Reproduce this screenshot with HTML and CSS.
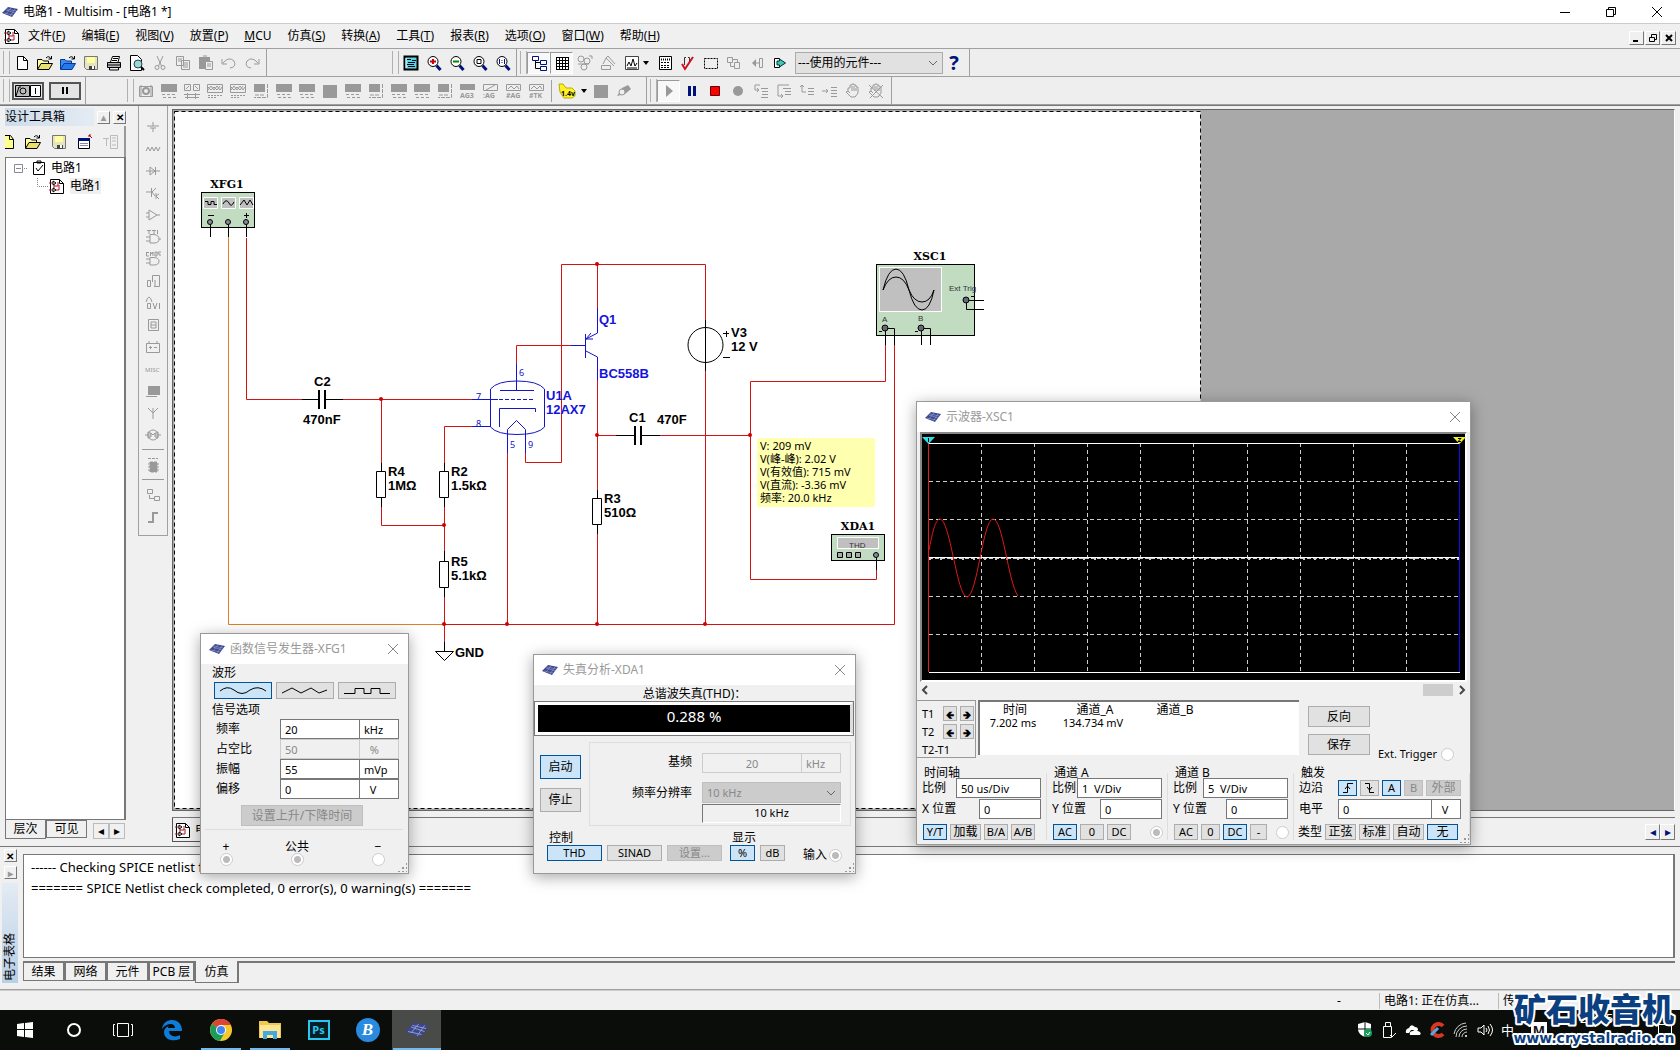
FILE: index.html
```html
<!DOCTYPE html>
<html lang="zh-CN">
<head>
    <meta charset="UTF-8">
    <title>电路1 - Multisim - [电路1 *]</title>
    <link rel="stylesheet" href="styles.css">
</head>
<body>
    <!-- icon library -->
    <svg class="defs" width="0" height="0">
        <defs>
            <symbol id="chip" viewBox="0 0 16 12"><path d="M0 7L6 1L16 3L10 11Z" fill="#3c488e"/><path d="M4 4L13 7M2 7L11 9M5 3L14 5M4 8L9 2M8 10L13 3" stroke="#98a2d4" stroke-width=".6" fill="none"/></symbol>
            <symbol id="doc" viewBox="0 0 16 16"><path d="M1.500 1.500H10.500L14.500 5.500V15.500H1.500Z" fill="#fff" stroke="#000"/><path d="M10.500 1.500V5.500H14.500" fill="none" stroke="#000"/><path d="M0 5H5V12H0M5 8H9V4M7 12H10V7" fill="none" stroke="#b01020"/><path d="M4 3L7 5L4 7ZM4 10L7 12L4 14Z" fill="#fff" stroke="#000"/></symbol>
            <symbol id="new" viewBox="0 0 16 16"><path d="M3.500 1.500H9.500L13.500 5.500V14.500H3.500Z" fill="#fff" stroke="#000"/><path d="M9.500 1.500V5.500H13.500" fill="none" stroke="#000"/></symbol>
            <symbol id="open" viewBox="0 0 16 16"><path d="M.5 14V4.500H5L6.500 6H11.500V9" fill="#ffff9c" stroke="#000"/><path d="M.5 14.500L4 8.500H15.500L12 14.500Z" fill="#e8e070" stroke="#000"/><path d="M9 3Q12 0 14 4M11.500 4H14.500V1" fill="none" stroke="#000"/></symbol>
            <symbol id="openb" viewBox="0 0 16 16"><path d="M.5 14V4.500H5L6.500 6H11.500V9" fill="#3c8cf0" stroke="#003a9c"/><path d="M.5 14.500L4 8.500H15.500L12 14.500Z" fill="#2878e8" stroke="#003a9c"/><path d="M9 3Q12 0 14 4M11.500 4H14.500V1" fill="none" stroke="#000"/></symbol>
            <symbol id="save" viewBox="0 0 16 16"><path d="M1.500 1.500H14.500V14.500H3.500L1.500 12.500Z" fill="#e4e4c0" stroke="#777"/><path d="M4 2H12V8H4Z" fill="#ffffa0"/><path d="M6 11H12V15H6Z" fill="#444"/><path d="M9 11H11V14H9Z" fill="#fff"/></symbol>
            <symbol id="print" viewBox="0 0 16 16"><path d="M4.500 7L6.500 1.500H13.500L12 7" fill="#fff" stroke="#000"/><path d="M1.500 7.500H14.500V12.500H1.500Z" fill="#bbb" stroke="#000"/><path d="M3.500 12.500H12.500V15H3.500ZM7 3.500H12M6 5.500H11M2 10H14" fill="none" stroke="#000"/></symbol>
            <symbol id="preview" viewBox="0 0 16 16"><path d="M1.500 .5H8.500L12.500 4.500V15.500H1.500Z" fill="#fff" stroke="#000"/><circle cx="9" cy="9" r="4" fill="#9fd8d0" stroke="#245"/><path d="M12 12L15 15" stroke="#000" stroke-width="2"/></symbol>
            <symbol id="cut" viewBox="0 0 16 16"><path d="M5 1L9.500 11M11 1L6.500 11" stroke="#999"/><circle cx="5" cy="12.500" r="2" fill="none" stroke="#999"/><circle cx="11" cy="12.500" r="2" fill="none" stroke="#999"/></symbol>
            <symbol id="copy" viewBox="0 0 16 16"><path d="M1.500 1.500H8.500V10.500H1.500ZM6.500 5.500H14.500V14.500H6.500ZM3 4H7M3 6H6M8 8H13M8 10H13M8 12H13" fill="none" stroke="#999"/></symbol>
            <symbol id="paste" viewBox="0 0 16 16"><path d="M1 2H12V14H1Z" fill="#999"/><path d="M7.500 6.500H14.500V14.500H7.500Z" fill="#eee" stroke="#999"/><path d="M9 9H13M9 11H13M5 1H9" stroke="#999"/></symbol>
            <symbol id="undo" viewBox="0 0 16 16"><path d="M1 4V9H6M2 8Q8 1 13 6Q16 12 9 13" fill="none" stroke="#999"/></symbol>
            <symbol id="redo" viewBox="0 0 16 16"><path d="M15 4V9H10M14 8Q8 1 3 6Q0 12 7 13" fill="none" stroke="#999"/></symbol>
            <symbol id="full" viewBox="0 0 16 16"><path d="M1.500 1.500H14.500V14.500H1.500Z" fill="#5cd8d8" stroke="#000" stroke-width="2"/><path d="M3 3V13" stroke="#fff"/><path d="M4 4.500H8M9 5.500H13M5 7.500H12M4 9.500H11M5 11.500H12" stroke="#003"/></symbol>
            <symbol id="mag" viewBox="0 0 16 16"><circle cx="7" cy="6.500" r="5" fill="#fff" stroke="#000"/><path d="M10.500 10.500L14.500 15" stroke="#00107c" stroke-width="3"/></symbol>
            <symbol id="tree" viewBox="0 0 16 16"><path d="M1.500 1.500H7.500V5.500H1.500ZM9.500 5.500H15.500V9.500H9.500ZM9.500 11.500H15.500V15.500H9.500Z" fill="#fff" stroke="#00107c"/><path d="M4.500 6V13.500H9M4.500 7.500H9" stroke="#000" fill="none"/></symbol>
            <symbol id="grid" viewBox="0 0 16 16"><path d="M2 2H15V15H2Z" fill="#fff"/><path d="M2.500 2V15M5.500 2V15M8.500 2V15M11.500 2V15M14.500 2V15M2 2.500H15M2 5.500H15M2 8.500H15M2 11.500H15M2 14.500H15" stroke="#000"/></symbol>
            <symbol id="gates" viewBox="0 0 16 16"><circle cx="4" cy="4" r="3" fill="none" stroke="#999"/><circle cx="10" cy="6" r="3" fill="none" stroke="#999"/><circle cx="7" cy="12" r="3" fill="none" stroke="#999"/><path d="M12 1H15V4M1 9H12" stroke="#999" fill="none"/></symbol>
            <symbol id="pen" viewBox="0 0 16 16"><path d="M1.500 10.500H10.500V14.500H1.500ZM3 9L6 3L14 11M6 3L8 1L15 9" fill="none" stroke="#999"/></symbol>
            <symbol id="graph" viewBox="0 0 16 16"><path d="M1.500 1.500H14.500V14.500H1.500Z" fill="#fff" stroke="#444"/><path d="M3 11L5 7L7 11L9 4L11 11L13 8M3 13H13" stroke="#000" fill="none"/></symbol>
            <symbol id="calc" viewBox="0 0 16 16"><path d="M2.500 1.500H14.500V14.500H2.500Z" fill="#fff" stroke="#000"/><path d="M4 4.500H13" stroke="#000" stroke-dasharray="1 1" stroke-width="2"/><path d="M4 7.500H13M4 10.500H13M4 12.500H13" stroke="#000" stroke-dasharray="2 1"/></symbol>
            <symbol id="erc" viewBox="0 0 16 16"><path d="M4.500 10V2.500H6M8 2.500H9.500V8" fill="none" stroke="#333"/><path d="M2 9L5 14L13 2" fill="none" stroke="#d0101c" stroke-width="2"/></symbol>
            <symbol id="area" viewBox="0 0 16 16"><path d="M1.500 3.500H14.500V13.500H1.500Z" fill="none" stroke="#000" stroke-dasharray="2 1"/></symbol>
            <symbol id="link" viewBox="0 0 16 16"><path d="M1.500 2.500H6.500V7.500H1.500ZM8.500 7.500H13.500V13.500H8.500ZM6 4.500H11.500V7M4.500 8V11.500H8" fill="none" stroke="#999"/></symbol>
            <symbol id="back" viewBox="0 0 16 16"><path d="M3 8L7 4V12Z" fill="#999"/><path d="M7 8H10M10.500 3.500H13.500V12.500H10.500Z" fill="none" stroke="#999"/></symbol>
            <symbol id="fwd" viewBox="0 0 16 16"><path d="M2.500 3.500H7.500V12.500H2.500Z" fill="#fff" stroke="#000"/><path d="M7.500 6V4L13.500 8L7.500 12V10H5V6Z" fill="#3cc8b4" stroke="#033"/></symbol>
            <!-- instruments, all disabled -->
            <symbol id="i1" viewBox="0 0 16 16"><path d="M1.500 3.500H14.500V13.500H1.500ZM3 2V14M13 2V14" fill="none" stroke="#999"/><circle cx="8" cy="8" r="3" fill="none" stroke="#999" stroke-width="2"/></symbol>
            <symbol id="i2" viewBox="0 0 16 16"><path d="M0 1H16V9H0Z" fill="#999"/><path d="M1 11.500H15M2 14.500H15" stroke="#999" stroke-dasharray="3 2"/></symbol>
            <symbol id="i3" viewBox="0 0 16 16"><path d="M.5 1.500H6.500V7.500H.5ZM9.500 1.500H15.500V7.500H9.500ZM2 6L5 3M11 3L14 6M0 11.500H16M1 14.500H15M3.500 10V16M11.500 10V16" fill="none" stroke="#999"/></symbol>
            <symbol id="i4" viewBox="0 0 16 16"><path d="M.5 1.500H15.500V9.500H.5ZM1 7L4 3L7 7L10 3L13 7L15 4M1 4L4 7L7 4L10 7L13 3" fill="none" stroke="#999"/><path d="M1 12.500H15M1 14.500H9" stroke="#999" stroke-dasharray="2 1"/></symbol>
            <symbol id="i5" viewBox="0 0 16 16"><path d="M1 1H12V9H1Z" fill="#999"/><path d="M14.500 1V14.500H1M2 12H12" fill="none" stroke="#999" stroke-dasharray="4 1"/></symbol>
            <symbol id="i6" viewBox="0 0 16 16"><path d="M1 2H15V15H1Z" fill="#999"/></symbol>
            <symbol id="probe" viewBox="0 0 20 16"><path d="M1 1H5L8 5H14L17 8V13L14 15H6L2 9Z" fill="#fff02c" stroke="#b8ac00"/></symbol>
            <symbol id="step1" viewBox="0 0 16 16"><path d="M7 2H2V7H5M4 5L6 7L4 9M8 5.500H15M9 8.500H15M9 11.500H15M8 14.500H15" fill="none" stroke="#999"/></symbol>
            <symbol id="step2" viewBox="0 0 16 16"><path d="M13 2H2V13H6M5 11L7 13L5 15M7 5.500H15M9 8.500H15M9 11.500H15" fill="none" stroke="#999"/></symbol>
            <symbol id="step3" viewBox="0 0 16 16"><path d="M1 4L3 2L5 4M3 2V9H7M9 5.500H15M9 8.500H15M9 11.500H15" fill="none" stroke="#999"/></symbol>
            <symbol id="step4" viewBox="0 0 16 16"><path d="M0 8H6M4 6L6 8L4 10M9 4.500H15M9 7.500H15M9 10.500H15M9 13.500H15" fill="none" stroke="#999"/></symbol>
            <symbol id="hand" viewBox="0 0 16 16"><path d="M3 8V5H5V2H7V1H9V2H11V4H13V10L10 14H6L1 9L3 8L5 10M7 3V8M9 3V8M11 5V8" fill="none" stroke="#999"/></symbol>
        </defs>
    </svg>

    <header class="titlebar">
        <svg class="logo"><use href="#chip"/></svg>
        <span class="caption">电路1 - Multisim - [电路1 *]</span>
        <div class="win-buttons">
            <button aria-label="最小化"><svg width="12" height="12"><path d="M1 6.500H11" stroke="#000"/></svg></button>
            <button aria-label="还原"><svg width="12" height="12"><path d="M1.500 3.500H8.500V10.500H1.500ZM3.500 3V1.500H10.500V8.500H9" fill="none" stroke="#000"/></svg></button>
            <button aria-label="关闭"><svg width="12" height="12"><path d="M1 1L11 11M11 1L1 11" stroke="#000"/></svg></button>
        </div>
    </header>

    <nav class="menubar">
        <svg class="i16"><use href="#doc"/></svg>
        <a href="#">文件(<u>F</u>)</a>
        <a href="#">编辑(<u>E</u>)</a>
        <a href="#">视图(<u>V</u>)</a>
        <a href="#">放置(<u>P</u>)</a>
        <a href="#"><u>M</u>CU</a>
        <a href="#">仿真(<u>S</u>)</a>
        <a href="#">转换(<u>A</u>)</a>
        <a href="#">工具(<u>T</u>)</a>
        <a href="#">报表(<u>R</u>)</a>
        <a href="#">选项(<u>O</u>)</a>
        <a href="#">窗口(<u>W</u>)</a>
        <a href="#">帮助(<u>H</u>)</a>
        <div class="mdi-buttons">
            <button aria-label="最小化"><svg width="10" height="10"><path d="M1 8H6" stroke="#000" stroke-width="2"/></svg></button>
            <button aria-label="还原"><svg width="10" height="10"><path d="M1.500 4.500H6.500V8.500H1.500ZM3.500 4V1.500H8.500V6.500H7" fill="none" stroke="#000"/></svg></button>
            <button aria-label="关闭"><svg width="10" height="10"><path d="M2 2L8 8M8 2L2 8" stroke="#000" stroke-width="2"/></svg></button>
        </div>
    </nav>

    <div class="toolbar">
        <div class="band band-file">
            <button><svg class="i16"><use href="#new"/></svg></button>
            <button><svg class="i16"><use href="#open"/></svg></button>
            <button><svg class="i16"><use href="#openb"/></svg></button>
            <button><svg class="i16"><use href="#save"/></svg></button>
            <button><svg class="i16"><use href="#print"/></svg></button>
            <button><svg class="i16"><use href="#preview"/></svg></button>
            <button><svg class="i16"><use href="#cut"/></svg></button>
            <button><svg class="i16"><use href="#copy"/></svg></button>
            <button><svg class="i16"><use href="#paste"/></svg></button>
            <button><svg class="i16"><use href="#undo"/></svg></button>
            <button><svg class="i16"><use href="#redo"/></svg></button>
        </div>
        <div class="band band-view">
            <button><svg class="i16"><use href="#full"/></svg></button>
            <button><svg class="i16"><use href="#mag"/><path d="M4 6.500H10M7 4V9" stroke="#c00" stroke-width="2"/></svg></button>
            <button><svg class="i16"><use href="#mag"/><path d="M4 6.500H10" stroke="#080" stroke-width="2"/></svg></button>
            <button><svg class="i16"><use href="#mag"/><path d="M5 4.500H9V8.500H5Z" fill="none" stroke="#000"/></svg></button>
            <button><svg class="i16"><use href="#mag"/><path d="M4.500 4V9M7 5V6M7 7V8M9.500 4V9" stroke="#00107c"/></svg></button>
        </div>
        <div class="band band-main">
            <button class="pressed"><svg class="i16"><use href="#tree"/></svg></button>
            <button class="pressed"><svg class="i16"><use href="#grid"/></svg></button>
            <button><svg class="i16"><use href="#gates"/></svg></button>
            <button><svg class="i16"><use href="#pen"/></svg></button>
            <button class="wide"><svg class="i16"><use href="#graph"/></svg><i class="drop"></i></button>
            <button><svg class="i16"><use href="#calc"/></svg></button>
            <button><svg class="i16"><use href="#erc"/></svg></button>
            <button><svg class="i16"><use href="#area"/></svg></button>
            <button><svg class="i16"><use href="#link"/></svg></button>
            <button><svg class="i16"><use href="#back"/></svg></button>
            <button><svg class="i16"><use href="#fwd"/></svg></button>
            <select class="inuse" aria-label="使用的元件"><option>---使用的元件---</option></select>
            <button class="help">?</button>
        </div>
    </div>

    <div class="toolbar">
        <div class="band band-switch">
            <button class="switch"><svg width="28" height="12"><path d="M1.500 .5H15.500V11.500H1.500ZM2 11L5 2H7" fill="#bbb" stroke="#000"/><circle cx="9" cy="6" r="3" fill="none" stroke="#000"/><path d="M16.500 .5H26.500V11.500H16.500Z" fill="#fff" stroke="#000"/><path d="M21.500 3V9" stroke="#000"/></svg></button>
            <button class="switch"><svg width="28" height="12"><path d="M12 2V9M16 2V9" stroke="#000" stroke-width="2"/></svg></button>
        </div>
        <div class="band band-instr">
            <button><svg class="i16"><use href="#i1"/></svg></button>
            <button><svg class="i16"><use href="#i2"/></svg></button>
            <button><svg class="i16"><use href="#i3"/></svg></button>
            <button><svg class="i16"><use href="#i4"/></svg></button>
            <button><svg class="i16"><use href="#i4"/></svg></button>
            <button><svg class="i16"><use href="#i5"/></svg></button>
            <button><svg class="i16"><use href="#i2"/></svg></button>
            <button><svg class="i16"><use href="#i2"/></svg></button>
            <button><svg class="i16"><use href="#i6"/></svg></button>
            <button><svg class="i16"><use href="#i2"/></svg></button>
            <button><svg class="i16"><use href="#i5"/></svg></button>
            <button><svg class="i16"><use href="#i2"/></svg></button>
            <button><svg class="i16"><use href="#i2"/></svg></button>
            <button><svg class="i16"><use href="#i5"/></svg></button>
            <button><svg class="i16"><path d="M0 1H15V7H0Z" fill="#999"/><text x="0" y="15">AG3</text></svg></button>
            <button><svg class="i16"><path d="M.5 1.500H14.500V7.500H.5ZM3 7L12 2" fill="none" stroke="#999"/><text x="0" y="15">:AG</text></svg></button>
            <button><svg class="i16"><path d="M.5 1.500H14.500V7.500H.5ZM2 6L5 3L8 6L11 3L13 6" fill="none" stroke="#999"/><text x="0" y="15">#AG</text></svg></button>
            <button><svg class="i16"><path d="M.5 1.500H14.500V7.500H.5ZM2 6L5 3L8 6L11 3L13 6" fill="none" stroke="#999"/><text x="0" y="15">#TK</text></svg></button>
            <span class="vsep"></span>
            <button class="wide"><svg class="i20"><use href="#probe"/><text class="probe-text" x="3" y="13">1.4v</text></svg><i class="drop"></i></button>
            <button><svg class="i16"><use href="#i6"/></svg></button>
            <button><svg class="i16"><path d="M1 13L6 5L12 2L15 6L9 11Z" fill="#999"/><circle cx="6" cy="9" r="3" fill="#eee" stroke="#999"/></svg></button>
        </div>
        <div class="band band-sim">
            <button class="pressed"><svg class="i16"><path d="M5 2L12 8L5 14Z" fill="#999"/></svg></button>
            <button><svg class="i16"><path d="M5.500 3V13M10.500 3V13" stroke="#00107c" stroke-width="3"/></svg></button>
            <button><svg class="i16"><path d="M3.500 3.500H12.500V12.500H3.500Z" fill="#f00" stroke="#600"/></svg></button>
            <button><svg class="i16"><circle cx="8" cy="8" r="5" fill="#999"/></svg></button>
            <button><svg class="i16"><use href="#step1"/></svg></button>
            <button><svg class="i16"><use href="#step2"/></svg></button>
            <button><svg class="i16"><use href="#step3"/></svg></button>
            <button><svg class="i16"><use href="#step4"/></svg></button>
            <button><svg class="i16"><use href="#hand"/></svg></button>
            <button><svg class="i16"><use href="#hand"/><path d="M1 2L15 15M15 2L2 15" stroke="#999"/></svg></button>
        </div>
    </div>

    <main class="workspace">
        <aside class="toolbox">
            <div class="toolbox-head"><span>设计工具箱</span><button class="faded">▴</button><button>✕</button></div>
            <div class="toolbox-tools">
                <svg class="half"><path d="M-2 1.500H5.500L8.500 5.500V14.500H-2Z" fill="#ffff8c" stroke="#000"/><path d="M4.500 1.500V5.500H8.500" fill="none" stroke="#000"/></svg>
                <svg class="i16"><use href="#open"/></svg>
                <svg class="i16"><use href="#save"/></svg>
                <svg class="i16"><path d="M1.500 4.500H12.500V14.500H1.500Z" fill="#fff" stroke="#000"/><path d="M1 5.500H13" stroke="#00107c" stroke-width="3"/><path d="M3 9.500H11M3 11.500H11" stroke="#88a"/><path d="M15 4L12 1M12 3V1H14" stroke="#b00" fill="none"/></svg>
                <svg class="i16"><path d="M0 4.500H6M3.500 4V12M7.500 1.500H14.500V14.500H7.500ZM9 4H13M9 7H13M9 11H13" fill="none" stroke="#bbb"/></svg>
            </div>
            <div class="tree">
                <div class="node"><svg width="14" height="16"><path d="M.5 4.500H8.500V12.500H.5ZM2 8.500H7" fill="#fff" stroke="#889"/><path d="M10 8.500H14" stroke="#888" stroke-dasharray="1 1"/></svg><svg width="14" height="16"><path d="M1.500 2.500H12.500V14.500H1.500Z" fill="#fff" stroke="#000"/><path d="M5 1H9V3H5ZM4 8L6 11L11 5" fill="none" stroke="#000"/></svg>电路1</div>
                <div class="node child"><svg width="12" height="16"><path d="M.5 0V8.500H12" stroke="#888" stroke-dasharray="1 1" fill="none"/></svg><svg class="i16"><use href="#doc"/></svg><span class="sel">电路1</span></div>
            </div>
            <div class="toolbox-tabs"><button>层次</button><button class="on">可见</button><button class="arr">◂</button><button class="arr">▸</button></div>
        </aside>

        <div class="parts">
            <svg class="i16"><path d="M2 7H14M8 3V7M5 9H11M8 9V13" stroke="#999"/></svg>
            <svg class="i16"><path d="M1 10L3 6L5 10L7 6L9 10L11 6L13 10L15 6" fill="none" stroke="#999"/></svg>
            <svg class="i16"><path d="M1 8H15M5 4L10 8L5 12ZM10.500 4V12" fill="none" stroke="#999"/></svg>
            <svg class="i16"><path d="M1 7H6M6.500 3V12M11 3L7 7L10 11M11 8V14M14 9L11 11L14 14" fill="none" stroke="#999"/></svg>
            <svg class="i16"><path d="M4 3L12 8L4 13ZM1 6H4M1 10H4M12 8H15" fill="none" stroke="#999"/></svg>
            <svg class="i16"><path d="M2 1.500H6M4 1V5M7 1.500H11M9 1V5M12.500 1V5M5 5.500H9Q14 6 14 10Q14 14 9 14H5ZM1 8H5M1 12H5M14 10H16" fill="none" stroke="#999"/></svg>
            <svg class="i16"><path d="M1 1.500H4M1.500 1V5H4M5.500 5V1L7 3L8 1V5M10 1H12V5H10ZM16 1H13V3H15V5M5 6.500H9Q14 7 14 10Q14 14 9 14H5ZM1 8H5M1 12H5" fill="none" stroke="#999"/></svg>
            <svg class="i16"><path d="M7.500 9V2.500H14.500V13.500H9M2.500 7.500H5.500V13.500H2.500ZM10 7V14" fill="none" stroke="#999"/></svg>
            <svg class="i16"><path d="M1 7Q4 -3 7 7M2.500 8.500H5.500V13.500H2.500ZM8 8L10 14L12 8M14.500 8V14" fill="none" stroke="#999"/></svg>
            <svg class="i16"><path d="M3.500 2.500H13.500V13.500H3.500ZM6 5H11V11H6ZM6 8H11" fill="none" stroke="#999"/></svg>
            <svg class="i16"><path d="M1.500 4.500H14.500V13.500H1.500ZM4 2V4M12 2V4M4 8.500H7M5.500 7V10M9 8.500H12" fill="none" stroke="#999"/></svg>
            <svg class="i20"><text x="2" y="11">MISC</text></svg>
            <svg class="i16"><path d="M3 3H15V12H3Z" fill="#999"/><path d="M1 13.500H12" stroke="#999"/></svg>
            <svg class="i16"><path d="M8 14V3M3 3L8 8L13 3" fill="none" stroke="#999"/></svg>
            <svg class="i16"><path d="M0 8H3M13 8H16M3 5H5V11H3ZM11 5H13V11H11ZM6 10V6L8 8L10 6V10" fill="none" stroke="#999"/><circle cx="8" cy="8" r="5" fill="none" stroke="#999"/></svg>
            <hr>
            <svg class="i16"><path d="M3 1.500H13M5 5H12V15H5ZM3 7H14M3 10H14M3 13H14" fill="#999" stroke="#999" stroke-dasharray="3 1"/></svg>
            <hr>
            <svg class="i16"><path d="M2.500 2.500H7.500V6.500H2.500ZM9.500 9.500H14.500V13.500H9.500ZM4.500 8V11.500H9" fill="none" stroke="#999"/></svg>
            <svg class="i16"><path d="M3 13H8V4H13" fill="none" stroke="#999" stroke-width="2"/></svg>
        </div>

        <section class="document">
            <div class="sheet-area">
                <svg class="sheet" viewBox="173 110 1029 700">
                    <rect x="174.500" y="111.500" width="1026" height="697" fill="#fff" stroke="#000" stroke-dasharray="4 3"/>
                    <!-- wires -->
                    <g class="wire">
                        <path class="orange" d="M228.500 236V624.500H444.500"/>
                        <path d="M246.500 238V399.500H302M343 399.500H472M381.500 399.500V463M381.500 507V525.500H444.500M472 426.500H444.500V463M444.500 507V551M444.500 597V642M507.500 453V624.500M525.500 453V462.500H561.500V264.500H705.500V320M516.500 364V345.500H571M597.500 264.500V308M597.500 380V490M597.500 534V624.500M597.500 435.500H616M660 435.500H750.500M705.500 371V624.500M885.500 345V381.500H750.500V579.500H876.500V570M894.500 345V624.500H444.500"/>
                    </g>
                    <g fill="#d00000">
                        <circle cx="381" cy="399" r="2"/><circle cx="444" cy="525" r="2"/><circle cx="444" cy="624" r="2"/><circle cx="507" cy="624" r="2"/><circle cx="597" cy="264" r="2"/><circle cx="597" cy="435" r="2"/><circle cx="597" cy="624" r="2"/><circle cx="705" cy="624" r="2"/><circle cx="750" cy="435" r="2"/>
                    </g>
                    <!-- passives -->
                    <g class="part">
                        <path d="M302 399.500H319M326 399.500H343M616 435.500H634M642 435.500H660M381.500 463V507M444.500 463V507M444.500 551V597M597.500 490V534M705.500 320V371M444.500 642V651M723 333.500H729M726.500 331V337M723 357.500H730"/>
                        <path d="M319 390V409M325 390V409M635 426V445M641 426V445" stroke-width="2"/>
                        <path d="M376.500 471.500H385.500V497.500H376.500ZM439.500 471.500H448.500V497.500H439.500ZM439.500 561.500H448.500V587.500H439.500ZM592.500 498.500H601.500V524.500H592.500ZM435.500 651.500H453.500L444.500 660.500Z" fill="#fff"/>
                        <circle cx="705.500" cy="345" r="17.500"/>
                    </g>
                    <g class="label">
                        <text x="314" y="386">C2</text><text x="303" y="424">470nF</text>
                        <text x="388" y="476">R4</text><text x="388" y="490">1MΩ</text>
                        <text x="451" y="476">R2</text><text x="451" y="490">1.5kΩ</text>
                        <text x="451" y="566">R5</text><text x="451" y="580">5.1kΩ</text>
                        <text x="455" y="657">GND</text>
                        <text x="604" y="503">R3</text><text x="604" y="517">510Ω</text>
                        <text x="629" y="422">C1</text><text x="657" y="424">470F</text>
                        <text x="731" y="337">V3</text><text x="731" y="351">12 V</text>
                    </g>
                    <!-- tube and transistor -->
                    <g class="active">
                        <path d="M490.500 389Q497 381 517 381Q538 381 544.500 389V427Q538 434.500 517 434.500Q497 434.500 490.500 427ZM516.500 364V390.500M500 390.500H534M472 399.500H498M472 426.500H490M499.500 427V408.500H535.500V412M507.500 453V429.500L516.500 420.500L525.500 429.500V453"/>
                        <path d="M499 399.500H534" stroke-dasharray="4 2"/>
                        <path d="M571 345.500H585M585.500 334V358M597.500 308V333L586 339M591 333L586 339H593M586 351L597.500 357V380"/>
                    </g>
                    <g class="label blue">
                        <text x="546" y="400">U1A</text><text x="546" y="414">12AX7</text>
                        <text x="599" y="324">Q1</text><text x="599" y="378">BC558B</text>
                    </g>
                    <g class="pin">
                        <text x="519" y="376">6</text><text x="476" y="400">7</text><text x="476" y="427">8</text><text x="510" y="448">5</text><text x="528" y="448">9</text>
                    </g>
                    <!-- function generator -->
                    <text class="inst" x="227" y="188">XFG1</text>
                    <rect class="inst-box" x="201.500" y="192.500" width="53" height="35"/>
                    <path class="screen" d="M203.500 197.500H217.500V208.500H203.500ZM221.500 197.500H235.500V208.500H221.500ZM239.500 197.500H253.500V208.500H239.500Z"/>
                    <g class="part"><path d="M205 201.500H208V204.500H211V201.500H214V204.500H217M223 204Q226 198 229 203Q231 208 234 202M240 205L244 200L247 205L250 200L253 205M208 215.500H214M244 215.500H249M246.500 213V218M210.500 222V237M228.500 222V237M246.500 222V237"/>
                        <circle cx="210" cy="222" r="2.500" fill="#889"/><circle cx="228" cy="222" r="2.500" fill="#889"/><circle cx="246" cy="222" r="2.500" fill="#889"/></g>
                    <!-- distortion analyzer -->
                    <text class="inst" x="858" y="530">XDA1</text>
                    <rect class="inst-box" x="831.500" y="534.500" width="53" height="26"/>
                    <rect class="screen" x="837.500" y="537.500" width="41" height="11"/>
                    <text class="tiny" x="849" y="548">THD</text>
                    <g class="part"><path d="M837.500 552.500H842.500V557.500H837.500ZM846.500 552.500H851.500V557.500H846.500ZM855.500 552.500H860.500V557.500H855.500Z" fill="#aaa"/><path d="M876.500 555V570"/><circle cx="876" cy="555" r="2.500" fill="#889"/></g>
                    <!-- oscilloscope -->
                    <text class="inst" x="930" y="260">XSC1</text>
                    <rect class="inst-box" x="876.500" y="264.500" width="98" height="71"/>
                    <rect class="screen" x="879.500" y="267.500" width="62" height="44"/>
                    <g class="part"><path d="M883 290Q888 269 896 269Q904 269 909 290Q914 310 922 310Q930 310 934 290M883 290Q888 277 896 277Q904 277 909 290Q914 302 922 302Q930 302 934 290"/>
                        <path d="M885.500 328V345M885 328.500H894.500V345M921.500 328V345M921 328.500H930.500V345M966 300.500H984M966.500 300V309.500H984M879 331.500H882M915 331.500H918M971 296.500H974"/>
                        <circle cx="885" cy="328" r="3" fill="#667"/><circle cx="921" cy="328" r="3" fill="#667"/><circle cx="966" cy="300" r="3" fill="#667"/></g>
                    <text class="tiny" x="882" y="322">A</text><text class="tiny" x="918" y="321">B</text><text class="tiny" x="949" y="291">Ext Trig</text>
                    <!-- measurement probe -->
                    <rect x="757" y="438" width="118" height="69" rx="2" fill="#ffffb0"/>
                    <g class="readout">
                        <text x="760" y="450">V: 209 mV</text>
                        <text x="760" y="463">V(峰-峰): 2.02 V</text>
                        <text x="760" y="476">V(有效值): 715 mV</text>
                        <text x="760" y="489">V(直流): -3.36 mV</text>
                        <text x="760" y="502">频率: 20.0 kHz</text>
                    </g>
                </svg>
            </div>
            <div class="doc-tabs">
                <div class="doc-tab"><svg class="i16"><use href="#doc"/></svg>电路1 *</div>
                <div class="doc-arrows"><button>◂</button><button>▸</button></div>
            </div>
        </section>
    </main>

    <section class="spreadsheet">
        <div class="sheet-side"><button>✕</button><button class="faded">▸</button><span>电子表格</span></div>
        <div class="sheet-main">
            <div class="log">
                <p>------ Checking SPICE netlist for 电路1 - 2016年 ------</p>
                <p>======= SPICE Netlist check completed, 0 error(s), 0 warning(s) =======</p>
            </div>
            <div class="log-tabs"><button>结果</button><button>网络</button><button>元件</button><button>PCB 层</button><button class="on">仿真</button></div>
        </div>
    </section>

    <footer class="status"><span class="dash">-</span><span class="run">电路1: 正在仿真...</span><span class="tran">传</span></footer>

    <div class="taskbar">
        <button aria-label="开始"><svg width="20" height="20"><path d="M2 4L9 3V9H2ZM10 3L18 2V9H10ZM2 10H9V17L2 16ZM10 10H18V18L10 17Z" fill="#fff"/></svg></button>
        <button aria-label="Cortana"><svg width="20" height="20"><circle cx="10" cy="10" r="6" fill="none" stroke="#fff" stroke-width="2"/></svg></button>
        <button aria-label="任务视图"><svg width="22" height="20"><path d="M5.500 3.500H16.500V16.500H5.500ZM3 4.500H1.500V15.500H3M19 4.500H20.500V15.500H19" fill="none" stroke="#fff"/></svg></button>
        <button aria-label="Edge"><svg width="22" height="22" viewBox="0 0 22 22"><path d="M1 10C2 3 7 1 11 1C17 1 21 5 21 12H8C8 17 14 19 19 16V20C12 23 3 21 3 13C3 10 5 8 8 7C7 8 7 8 7 9H14C14 3 5 4 1 10Z" fill="#0f7cd8"/></svg></button>
        <button class="open" aria-label="Chrome"><svg width="22" height="22"><circle cx="11" cy="11" r="11" fill="#f5c92c"/><path d="M11 11L2 5A11 11 0 0 1 21 6H11Z" fill="#db4437"/><path d="M11 11L2 5A11 11 0 0 0 10 22L15 13Z" fill="#1b9c58"/><circle cx="11" cy="11" r="5" fill="#fff"/><circle cx="11" cy="11" r="4" fill="#4285f4"/></svg></button>
        <button class="open" aria-label="资源管理器"><svg width="24" height="20"><path d="M1 1H9L11 3H23V18H1Z" fill="#f0c850"/><path d="M2 5H22V18H2Z" fill="#ffe493"/><path d="M5 11H19V19H15V15H9V19H5Z" fill="#3fa9e0"/></svg></button>
        <button aria-label="Photoshop"><span class="ps">Ps</span></button>
        <button aria-label="B"><span class="b">B</span></button>
        <button class="open current" aria-label="Multisim"><svg width="24" height="18"><use href="#chip"/></svg></button>
        <div class="tray">
            <svg width="16" height="16"><path d="M1 2L8 0L14 2V8Q13 13 8 15Q2 13 1 8Z" fill="#fff"/><path d="M8 0V15M1 7H14" stroke="#111"/><circle cx="11" cy="11" r="4" fill="#12a05c"/><path d="M9 11L11 13L13 10" stroke="#fff" fill="none"/></svg>
            <svg width="16" height="16"><path d="M4.500 .5H9.500V4.500H4.500ZM2.500 4.500H10.500V15.500H2.500ZM9 13L11 15L15 11" fill="none" stroke="#fff"/></svg>
            <svg width="16" height="16"><path d="M1 11Q0 7 4 6Q6 1 10 5Q13 5 13 8L6 8L4 11Z" fill="#fff"/><path d="M5 13Q4 9 8 9Q11 6 13 9Q17 10 15 13Z" fill="#fff"/></svg>
            <svg width="16" height="16"><path d="M14 4A6 6 0 1 0 14 12" fill="none" stroke="#d83820" stroke-width="4"/><path d="M2 13L9 6" stroke="#58a8e0" stroke-width="3"/></svg>
            <svg width="16" height="16"><path d="M3 15A11 11 0 0 1 14 4M6 15A8 8 0 0 1 14 7M9 15A5 5 0 0 1 14 10M1 12A13 13 0 0 1 13 1" fill="none" stroke="#ccc"/><circle cx="13" cy="14" r="1" fill="#fff"/></svg>
            <svg width="16" height="16"><path d="M1 6H4L7 3V13L4 10H1ZM9 6Q11 8 9 10M11 4Q14 8 11 12M13 2Q18 8 13 14" fill="none" stroke="#fff"/></svg>
            <span>中</span><span class="ime">M</span><span class="clock">21:55</span>
            <svg class="note" width="16" height="16"><path d="M1.500 2.500H14.500V11.500H9L6 14V11.500H1.500Z" fill="none" stroke="#fff"/></svg>
        </div>
    </div>

    <!-- function generator window -->
    <section class="window win-xfg">
        <div class="win-title"><svg class="logo"><use href="#chip"/></svg><span>函数信号发生器-XFG1</span><button aria-label="关闭"><svg width="12" height="12"><path d="M1 1L11 11M11 1L1 11" stroke="#888"/></svg></button></div>
        <div class="xfg-body">
            <fieldset class="xfg-wave">
                <legend>波形</legend>
                <button class="on"><svg width="48" height="10"><path d="M1 5Q8 -1 15 4Q23 11 31 4Q39 -1 47 5" fill="none" stroke="#000"/></svg></button>
                <button><svg width="48" height="10"><path d="M1 7L11 2L20 7L30 2L38 7L46 4" fill="none" stroke="#000"/></svg></button>
                <button><svg width="48" height="10"><path d="M1 7.500H12V2.500H21V7.500H28V2.500H37V7.500H47" fill="none" stroke="#000"/></svg></button>
            </fieldset>
            <fieldset class="xfg-signal">
                <legend>信号选项</legend>
                <div class="row"><label for="freq">频率</label><input id="freq" value="20"><input class="unit" aria-label="单位" value="kHz"></div>
                <div class="row"><label for="duty">占空比</label><input id="duty" value="50" disabled><input class="unit" aria-label="单位" value="  %" disabled></div>
                <div class="row"><label for="amp">振幅</label><input id="amp" value="55"><input class="unit" aria-label="单位" value="mVp"></div>
                <div class="row"><label for="offs">偏移</label><input id="offs" value="0"><input class="unit" aria-label="单位" value="  V"></div>
                <button class="rise" disabled>设置上升/下降时间</button>
            </fieldset>
            <div class="terminals">
                <label>+<input type="radio" class="filled"></label>
                <label>公共<input type="radio" class="filled"></label>
                <label>−<input type="radio"></label>
            </div>
        </div>
        <i class="resize"></i>
    </section>

    <!-- distortion analyzer window -->
    <section class="window win-xda">
        <div class="win-title"><svg class="logo"><use href="#chip"/></svg><span>失真分析-XDA1</span><button aria-label="关闭"><svg width="12" height="12"><path d="M1 1L11 11M11 1L1 11" stroke="#888"/></svg></button></div>
        <div class="thd-label">总谐波失真(THD)：</div>
        <div class="thd-value">0.288 %</div>
        <div class="xda-mid">
            <div class="xda-run"><button class="on">启动</button><button>停止</button></div>
            <div class="xda-freq">
                <label for="fund">基频</label><div class="pair"><input id="fund" value="20" disabled><input class="unit" aria-label="单位" value="kHz" disabled></div>
                <label for="res">频率分辨率</label><select id="res" disabled><option>10 kHz</option></select>
                <span></span><output>10 kHz</output>
            </div>
        </div>
        <div class="xda-bottom">
            <fieldset class="xda-ctl"><legend>控制</legend><button class="on">THD</button><button>SINAD</button><button disabled>设置...</button></fieldset>
            <fieldset class="xda-disp"><legend>显示</legend><button class="on">%</button><button>dB</button></fieldset>
            <label class="xda-in">输入<input type="radio" class="filled"></label>
        </div>
        <i class="resize"></i>
    </section>

    <!-- oscilloscope window -->
    <section class="window win-xsc">
        <div class="win-title"><svg class="logo"><use href="#chip"/></svg><span>示波器-XSC1</span><button aria-label="关闭"><svg width="12" height="12"><path d="M1 1L11 11M11 1L1 11" stroke="#888"/></svg></button></div>
        <div class="scope">
            <svg viewBox="920 435 546 245">
                <path d="M981.500 443V672M1034.500 443V672M1087.500 443V672M1140.500 443V672M1193.500 443V672M1247.500 443V672M1300.500 443V672M1353.500 443V672M1406.500 443V672M929 481.500H1459M929 519.500H1459M929 596.500H1459M929 634.500H1459" stroke="#ccc" stroke-dasharray="4 3" fill="none"/>
                <path d="M929 559H1459" stroke="#ccc" stroke-width="2" stroke-dasharray="2 9"/>
                <path d="M929 443.500H1460M929 672.500H1460" stroke="#fff"/>
                <path d="M929 557.500H1460" stroke="#fff"/>
                <path d="M929 558.500H1460" stroke="#ccc" stroke-dasharray="4 2"/>
                <path d="M928.500 443V672" stroke="#e02020"/><path d="M1459.500 443V672" stroke="#1010e0"/>
                <path d="M929 550C932 535 935 519 940 519C950 519 957 597 967 597C977 597 983 519 993 519C1003 519 1008 582 1018 596" fill="none" stroke="#e01818"/>
                <path d="M922 437H935L928.500 444Z" fill="#30e0e8"/><path d="M1453 437H1466L1459.500 444Z" fill="#f0f030"/>
                <path d="M928.500 438V442M1458 438.500H1461L1458 441.500H1461" stroke="#000" fill="none"/>
            </svg>
        </div>
        <div class="scroll"><svg width="8" height="10"><path d="M6 1L2 5L6 9" fill="none" stroke="#444" stroke-width="2"/></svg><i></i><svg width="8" height="10"><path d="M2 1L6 5L2 9" fill="none" stroke="#444" stroke-width="2"/></svg></div>
        <div class="xsc-read">
            <div class="cursors">
                <span>T1</span><button>🡸</button><button>🡺</button>
                <span>T2</span><button>🡸</button><button>🡺</button>
                <span class="diff">T2-T1</span>
            </div>
            <table>
                <tr><th>时间</th><th>通道_A</th><th>通道_B</th></tr>
                <tr><td>7.202 ms</td><td>134.734 mV</td><td></td></tr>
            </table>
            <div class="xsc-actions"><button>反向</button><button>保存</button></div>
            <label class="ext">Ext. Trigger<input type="radio"></label>
        </div>
        <div class="xsc-groups">
            <fieldset class="g-time">
                <legend>时间轴</legend>
                <div class="row"><label for="ts">比例</label><input id="ts" value="50 us/Div"></div>
                <div class="row"><label for="tx">X 位置</label><input id="tx" class="short" value="0"></div>
                <div class="btns"><button class="on">Y/T</button><button class="cjk">加载</button><button>B/A</button><button>A/B</button></div>
            </fieldset>
            <fieldset class="g-a">
                <legend>通道 A</legend>
                <div class="row"><label for="as">比例</label><input id="as" value="1  V/Div"></div>
                <div class="row"><label for="ay">Y 位置</label><input id="ay" class="short" value="0"></div>
                <div class="btns"><button class="on">AC</button><button>0</button><button>DC</button><input type="radio" class="filled" aria-label="A"></div>
            </fieldset>
            <fieldset class="g-b">
                <legend>通道 B</legend>
                <div class="row"><label for="bs">比例</label><input id="bs" value="5  V/Div"></div>
                <div class="row"><label for="by">Y 位置</label><input id="by" class="short" value="0"></div>
                <div class="btns"><button>AC</button><button class="zero">0</button><button class="on">DC</button><button class="minus">-</button><input type="radio" aria-label="B"></div>
            </fieldset>
            <fieldset class="g-trig">
                <legend>触发</legend>
                <div class="row edge"><span>边沿</span>
                    <button class="on"><svg width="12" height="12"><path d="M1 10.500H5.500V1.500H11M3 7L5.500 4L8 7" fill="none" stroke="#000"/></svg></button>
                    <button><svg width="12" height="12"><path d="M1 1.500H5.500V10.500H10M3 5L5.500 8L8 5" fill="none" stroke="#000"/></svg></button>
                    <button class="on">A</button><button disabled>B</button><button class="cjk" disabled>外部</button></div>
                <div class="row"><label for="lv">电平</label><input id="lv" class="level" value="0"><input class="unit" aria-label="单位" value="  V"></div>
                <div class="btns"><span>类型</span><button class="cjk">正弦</button><button class="cjk">标准</button><button class="cjk">自动</button><button class="cjk on">无</button></div>
            </fieldset>
        </div>
        <i class="resize"></i>
    </section>

    <svg class="watermark" width="168" height="60" viewBox="0 0 168 60">
        <text class="wm-cn" x="84" y="31" text-anchor="middle">矿石收音机</text>
        <text class="wm-url" x="84" y="53" text-anchor="middle">www.crystalradio.cn</text>
    </svg>
</body>
</html>
```
FILE: styles.css
```css
* { box-sizing: border-box; }
body { margin: 0; height: 100vh; min-height: 900px; display: flex; flex-direction: column; position: relative; overflow: hidden; background: #f0f0f0; color: #000; font-family: "Noto Sans", "Noto Sans CJK SC", sans-serif; font-size: 12px; line-height: 16px; }
button, input, select { font: inherit; color: inherit; margin: 0; padding: 0; border-radius: 0; }
button { background: none; border: 0; display: flex; align-items: center; justify-content: center; white-space: nowrap; }
svg { flex: none; display: block; }
svg text { white-space: pre; }
.defs { position: absolute; }
.i16 { width: 16px; height: 16px; overflow: hidden; }
.i20 { width: 20px; height: 16px; }
.half { width: 10px; height: 16px; overflow: hidden; }
.logo { width: 16px; height: 12px; }

/* title and menu */
.titlebar { height: 24px; flex: none; display: flex; align-items: center; padding-left: 2px; background: #fff; border-bottom: 1px solid #ccc; }
.caption { margin-left: 5px; }
.win-buttons { margin-left: auto; display: flex; }
.win-buttons button { width: 46px; height: 20px; }
.menubar { height: 25px; flex: none; display: flex; align-items: center; padding: 0 4px; gap: 16px; border-bottom: 1px solid #a0a0a0; }
.menubar .i16 { margin-right: -8px; }
.menubar a { color: #000; text-decoration: none; white-space: nowrap; }
.mdi-buttons { margin-left: auto; display: flex; gap: 1px; padding-top: 3px; }
.mdi-buttons button { width: 15px; height: 14px; border: 1px solid; border-color: #fff #777 #777 #fff; }

/* toolbars */
.toolbar { height: 28px; flex: none; display: flex; border-bottom: 1px solid #a0a0a0; background: #eee; }
.band { display: flex; align-items: center; padding-left: 10px; border-right: 1px solid #a0a0a0; position: relative; }
.band::before { content: ""; position: absolute; left: 3px; top: 2px; bottom: 2px; width: 5px; border: 1px solid #b0b0b0; border-width: 0 1px; }
.band button { width: 23px; height: 22px; }
.band button.wide { width: 34px; gap: 3px; }
.band .pressed { background: #f8f8f8; border: 1px solid; border-color: #999 #fff #fff #999; }
.band text { font-size: 7px; fill: #999; font-weight: bold; }
.parts text { font-size: 6px; fill: #999; }
.band .probe-text { fill: #000; }
.drop { border: 3px solid transparent; border-top: 4px solid #000; border-bottom: 0; }
select { appearance: none; background: #e1e1e1 url("data:image/svg+xml,%3Csvg xmlns='http://www.w3.org/2000/svg' width='10' height='6'%3E%3Cpath d='M1 1L5 5L9 1' fill='none' stroke='%23666'/%3E%3C/svg%3E") right 4px center no-repeat; }
.band-file { width: 267px; }
.band-view { margin-left: 122px; width: 128px; }
.band-main { width: 453px; }
.inuse { width: 148px; height: 22px; margin: 0 2px 0 4px; padding-left: 2px; border: 1px solid #aaa; }
.band .help { width: 18px; font-size: 20px; font-weight: bold; color: #00107c; }
.band-switch { width: 86px; gap: 5px; padding-left: 12px; }
.band-switch .switch { width: 32px; height: 18px; border: 2px solid #555; background: #e4e4e4; }
.band-instr { margin-left: 38px; width: 523px; }
.band-sim { width: 245px; }
.vsep { width: 1px; height: 22px; margin: 0 3px; background: #a0a0a0; }

/* workspace */
.workspace { flex: 1; min-height: 0; display: flex; border-bottom: 1px solid #777; border-top: 1px solid #777; }
.toolbox { width: 128px; flex: none; display: flex; flex-direction: column; padding: 2px 2px 4px 5px; }
.toolbox-head { display: flex; align-items: center; height: 18px; gap: 3px; }
.toolbox-head span { flex: 1; line-height: 18px; background: linear-gradient(90deg, #cddcec, #e4ebf3); }
.toolbox-head button, .sheet-side button { width: 13px; height: 13px; font-size: 10px; font-weight: bold; border: 1px solid; border-color: #fff #777 #777 #fff; }
button.faded { color: #999; }
.toolbox-tools { height: 31px; display: flex; align-items: center; gap: 10px; overflow: hidden; border-right: 2px solid #999; }
.tree { flex: 1; background: #fff; border: 1px solid #777; border-right-width: 2px; padding: 1px 8px; }
.node { display: flex; align-items: center; height: 18px; gap: 4px; }
.node svg + svg { margin-right: 1px; }
.child { padding-left: 23px; gap: 0; }
.sel { background: #f0f0f0; margin-left: 4px; }
.toolbox-tabs { display: flex; height: 22px; align-items: flex-start; }
.toolbox-tabs button { width: 41px; height: 19px; border: 1px solid #777; border-top: 0; }
.toolbox-tabs .on { height: 18px; border: 1px solid #777; }
.toolbox-tabs .arr { width: 16px; height: 16px; margin-top: 3px; border: 1px solid #bbb; }
.toolbox-tabs .on + .arr { margin-left: 6px; }
.parts { width: 30px; flex: none; margin-left: 10px; margin-right: 4px; border: 1px solid #a0a0a0; border-width: 0 1px 1px; align-self: flex-start; display: flex; flex-direction: column; align-items: center; gap: 6px; padding: 13px 0 10px; }
.parts hr { width: 22px; margin: 0 0 1px; border: 0; border-top: 1px solid #999; }
.document { flex: 1; min-width: 0; display: flex; flex-direction: column; padding: 3px 5px 0 0; }
.sheet-area { flex: 1; min-height: 0; overflow: hidden; background: #a9a9a9; border: 1px solid #666; border-right-color: #fff; }
.sheet { width: 1029px; height: 700px; }
.wire { fill: none; stroke: #d21414; }
.wire .orange { stroke: #e08020; }
.part { fill: none; stroke: #000; }
.active { fill: none; stroke: #1414c8; }
.label { font: bold 13px "Liberation Sans", sans-serif; }
.blue { fill: #1414dc; }
.pin { font-size: 9px; fill: #1414c8; }
.inst { font: bold 11px "DejaVu Serif", serif; text-anchor: middle; }
.inst-box { fill: #c1dcc1; stroke: #000; }
.screen { fill: #c0c0c0; stroke: #fff; }
.tiny { font: 8px "Liberation Sans", sans-serif; fill: #333; }
.readout { font-size: 11px; }
.doc-tabs { height: 29px; flex: none; display: flex; justify-content: space-between; align-items: flex-start; margin-top: 6px; border-top: 1px solid #777; }
.doc-tab { display: flex; align-items: center; gap: 4px; height: 24px; padding: 0 6px 0 2px; border: 1px solid #555; border-top: 0; }
.doc-arrows { display: flex; margin-top: 6px; }
.doc-arrows button { width: 15px; height: 16px; color: #00107c; border: 1px solid; border-color: #fff #777 #777 #fff; }

/* spreadsheet view */
.spreadsheet { height: 143px; flex: none; display: flex; padding: 2px 5px 6px 1px; border-bottom: 1px solid #a0a0a0; }
.sheet-side { width: 18px; flex: none; display: flex; flex-direction: column; align-items: center; gap: 4px; }
.sheet-side span { flex: 1; width: 16px; writing-mode: vertical-rl; text-orientation: sideways; transform: rotate(180deg); padding-top: 2px; background: linear-gradient(#b8cfe6, #e4ebf3); line-height: 16px; }
.sheet-main { flex: 1; min-width: 0; margin-left: 4px; display: flex; flex-direction: column; padding-top: 5px; }
.log { flex: 1; background: #fff; border: 1px solid #777; border-right-width: 2px; padding: 2px 7px; }
.log p { margin: 0; font-size: 13px; line-height: 21px; }
.log-tabs { display: flex; height: 22px; margin-top: 3px; border-top: 2px solid #777; }
.log-tabs button { width: 42px; height: 18px; border: 1px solid #777; border-width: 0 2px 1px 1px; }
.log-tabs button:nth-child(4) { width: 46px; }
.log-tabs .on { width: 44px; height: 22px; background: #f0f0f0; margin-top: -2px; }
.status { height: 20px; flex: none; display: flex; justify-content: flex-end; align-items: center; border-top: 1px solid #ccc; }
.status span { border-left: 1px solid #bbb; padding-left: 4px; }
.status .dash { border: 0; width: 46px; }
.status .run { width: 119px; }
.status .tran { width: 182px; }

/* taskbar */
.taskbar { height: 40px; flex: none; display: flex; background: #0b0d0a; color: #fff; }
.taskbar > button { width: 49px; height: 40px; }
.taskbar .open { background: linear-gradient(#76b9ed, #76b9ed) center bottom / 40px 2px no-repeat; }
.taskbar .current { background: linear-gradient(#76b9ed, #76b9ed) center bottom / 48px 2px no-repeat #484b48; }
.ps { width: 22px; height: 20px; border: 2px solid #28c8f0; color: #28c8f0; background: #061e26; font-weight: bold; font-size: 11px; line-height: 16px; }
.b { width: 24px; height: 24px; border-radius: 50%; background: #2a8ae0; font: italic bold 17px/24px "Liberation Serif", serif; }
.tray { margin-left: auto; display: flex; align-items: center; gap: 8px; padding-right: 7px; }
.tray span { font-size: 13px; width: 16px; }
.tray .ime { color: #111; background: #fff; line-height: 16px; text-align: center; font-weight: bold; margin-left: 6px; }
.tray .clock { width: 40px; margin-left: 25px; align-self: flex-start; }
.tray .note { margin-left: 29px; }

/* floating instrument windows */
.window { position: absolute; display: flex; flex-direction: column; background: #f0f0f0; border: 1px solid #999; box-shadow: 0 3px 14px rgba(0,0,0,0.35); }
.win-title { height: 30px; flex: none; display: flex; align-items: center; background: #fff; padding-left: 8px; color: #999; }
.win-title span { flex: 1; margin-left: 5px; font-size: 12px; }
.win-title button { width: 30px; height: 28px; }
.window fieldset { margin: 0; padding: 0; border: 0; min-width: 0; }
.window legend { padding: 0 2px; line-height: 14px; background: #f0f0f0; }
.window fieldset button, .xda-run button, .xsc-actions button { height: 16px; font-size: 11px; background: #e1e1e1; border: 1px solid #adadad; }
.window button.on { background: #cce4f7 !important; border: 1px solid #005499 !important; }
.window button:disabled { background: #ccc; border-color: #bfbfbf; color: #888; }
.window .cjk { font-size: 12px !important; }
.window input:not([type="radio"]) { height: 20px; min-width: 0; border: 1px solid #777; background: #fff; padding: 0 4px; font-size: 11px; }
.window input:disabled:not([type="radio"]) { background: #f0f0f0; border-color: #ccc; color: #888; }
.window input[type="radio"] { appearance: none; width: 13px; height: 13px; border: 1px solid #ccc; border-radius: 50%; background: #fff; flex: none; }
.window input.filled[type="radio"] { background: radial-gradient(#bbb 0 3px, #fff 4px); }
.row { display: flex; align-items: center; }
.resize { position: absolute; right: 1px; bottom: 1px; width: 10px; height: 10px; background: radial-gradient(#999 1px, transparent 1px) 0 0 / 4px 4px; clip-path: polygon(100% 0, 100% 100%, 0 100%); }

.win-xfg { left: 200px; top: 633px; width: 209px; height: 241px; }
.xfg-body { padding: 2px 5px 0 4px; }
.window .xfg-wave { display: flex; gap: 4px; padding-top: 2px; }
.xfg-wave legend { margin-left: 5px; }
.window .xfg-wave button { width: 58px; height: 17px; }
.xfg-wave button.on { margin-left: 9px; }
.xfg-signal { padding-top: 1px; }
.window .xfg-signal { margin-top: 4px; }
.xfg-signal legend { margin-left: 5px; margin-bottom: 2px; }
.xfg-signal .row { padding-left: 11px; height: 20px; }
.xfg-signal label { width: 64px; }
.xfg-signal input { width: 80px; }
.xfg-signal .unit, .pair .unit { width: 40px !important; margin-left: -1px; }
.window .xfg-signal .rise { width: 122px; height: 21px; margin: 6px 0 3px 36px; font-size: 12px; }
.terminals { display: grid; grid-template-columns: 42px 100px 62px; padding-top: 11px; border-top: 1px solid #ddd; }
.terminals label { display: flex; flex-direction: column; align-items: center; line-height: 12px; }

.win-xda { left: 533px; top: 654px; width: 323px; height: 220px; }
.thd-label { text-align: center; line-height: 17px; }
.thd-value { height: 33px; margin: 0 2px 0 1px; border: 3px solid #fff; border-right-color: #ddd; outline: 1px solid #777; background: #000; color: #fff; text-align: center; font-size: 15px; line-height: 22px; }
.xda-mid { display: flex; margin-top: 7px; gap: 8px; }
.xda-run { width: 48px; padding: 13px 0 0 6px; display: flex; flex-direction: column; gap: 9px; }
.window .xda-run button { height: 24px; font-size: 12px; }
.xda-freq { flex: 1; margin-right: 4px; height: 84px; padding: 10px 9px 0 0; border: 1px solid #ddd; display: grid; grid-template-columns: 102px 139px; column-gap: 10px; align-content: start; align-items: center; }
.xda-freq label { text-align: right; }
.xda-freq label:first-child { margin-bottom: 12px; }
.pair { display: flex; margin-bottom: 9px; }
.pair input { width: 100px; text-align: center; }
.pair .unit { text-align: left; }
.xda-freq select { height: 21px; background-color: #ccc; border: 1px solid #bfbfbf; color: #888; font-size: 11px; padding-left: 4px; opacity: 1; }
.xda-freq output { height: 19px; margin-top: 1px; text-align: center; font-size: 11px; border: 1px solid; border-color: #777 #fff #fff #777; }
.xda-bottom { display: flex; margin-top: 5px; padding-left: 4px; }
.xda-bottom fieldset { display: flex; gap: 5px; }
.xda-ctl { width: 188px; }
.window .xda-ctl { padding-left: 9px; }
.xda-ctl button { width: 55px; }
.xda-disp { width: 66px; }
.window .xda-disp { padding-left: 4px; }
.xda-disp button { width: 25px; }
.xda-in { display: flex; align-items: center; gap: 2px; margin: 16px 0 0 11px; }

.win-xsc { left: 916px; top: 401px; width: 555px; height: 444px; }
.scope { height: 250px; flex: none; margin: 0 3px; border: 2px solid #888; border-right-color: #fff; border-bottom-color: #fff; background: #000; }
.scope svg { width: 546px; height: 245px; margin-left: -2px; margin-top: 1px; }
.scroll { height: 16px; display: flex; align-items: center; padding: 0 4px; }
.scroll i { width: 30px; height: 12px; margin-left: auto; margin-right: 5px; background: #cdcdcd; }
.xsc-read { display: flex; height: 60px; margin-top: 2px; }
.cursors { width: 59px; height: 58px; display: grid; grid-template-columns: 18px 14px 14px; gap: 2px 3px; padding: 5px 0 0 5px; align-content: start; border: 1px solid #999; border-left: 0; font-size: 11px; }
.cursors button { width: 14px; height: 15px; background: #e1e1e1; border: 1px solid #adadad; font-weight: bold; font-size: 10px; }
.cursors .diff { grid-column: 1 / 4; }
.xsc-read table { width: 321px; height: 55px; margin-left: 2px; background: #fff; border: 1px solid #777; border-width: 2px 0 0 2px; border-spacing: 0; display: block; }
.xsc-read th { width: 70px; min-width: 70px; padding: 0; font-weight: normal; line-height: 15px; }
.xsc-read th:nth-child(2) { width: 90px; min-width: 90px; }
.xsc-read td { padding: 0 4px 0 0; font-size: 11px; line-height: 12px; text-align: center; white-space: nowrap; }
.xsc-actions { margin: 6px 0 0 9px; display: flex; flex-direction: column; gap: 7px; }
.window .xsc-actions button { width: 62px; height: 21px; font-size: 12px; }
.ext { display: flex; align-items: center; gap: 4px; margin: 46px 0 0 8px; font-size: 11px; white-space: nowrap; height: 16px; }
.xsc-groups { display: flex; margin-top: 6px; }
.xsc-groups legend { margin-left: 5px; }
.xsc-groups legend + .row { margin-top: -2px; }
.xsc-groups fieldset { border-right: 1px solid #ddd; }
.g-time { width: 130px; }
.g-a { width: 121px; }
.g-b { width: 126px; }
.g-trig { flex: 1; }
.xsc-groups .row { padding: 0 5px 0 5px; height: 20px; margin-bottom: 1px; }
.g-time .row, .g-a .row, .g-b .row { justify-content: space-between; }
.xsc-groups .row input { width: 85px; }
.xsc-groups .row .short { width: 62px; }
.xsc-groups .g-trig .level { width: 94px; margin-left: 15px; }
.xsc-groups .g-trig .unit { width: 30px; margin-left: -1px; }
.btns { display: flex; align-items: center; gap: 3px; padding: 4px 4px 0 6px; }
.btns button { width: 24px; height: 17px; }
.btns .cjk { width: 31px; }
.btns .zero { width: 19px; }
.btns .minus { width: 17px; }
.btns input { margin-left: auto; }
.g-trig .btns { padding-left: 4px; }
.edge { gap: 3px; }
.edge button { width: 19px; }
.edge span + button { margin-left: 12px; }
.edge .cjk { width: 35px; }

.watermark { position: absolute; right: 2px; bottom: 0; }
.watermark text { fill: #0c3f80; stroke: #fff; stroke-width: 4px; paint-order: stroke; stroke-linejoin: round; }
.wm-cn { font: 900 32px "Noto Sans CJK SC", sans-serif; }
.wm-url { font: bold 14px "DejaVu Sans", sans-serif; }
```
